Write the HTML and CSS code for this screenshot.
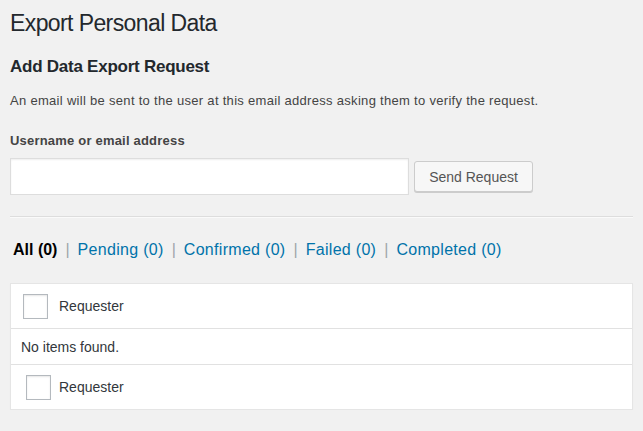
FILE: index.html
```html
<!DOCTYPE html>
<html lang="en">
<head>
<meta charset="utf-8">
<title>Export Personal Data</title>
<link rel="stylesheet" href="styles.css">
</head>
<body>
<div class="wrap">
  <h1 class="title">Export Personal Data</h1>
  <h2 class="subtitle">Add Data Export Request</h2>
  <p class="desc">An email will be sent to the user at this email address asking them to verify the request.</p>
  <label class="field-label" for="username">Username or email address</label>
  <div class="form-row">
    <input class="text-input" type="text" id="username">
    <button class="button" type="button">Send Request</button>
  </div>
  <hr class="divider">
  <ul class="filters">
    <li class="current">All <span>(0)</span></li>
    <li class="sep">|</li>
    <li><a href="#">Pending (0)</a></li>
    <li class="sep">|</li>
    <li><a href="#">Confirmed (0)</a></li>
    <li class="sep">|</li>
    <li><a href="#">Failed (0)</a></li>
    <li class="sep">|</li>
    <li><a href="#">Completed (0)</a></li>
  </ul>
  <div class="table">
    <div class="row head">
      <span class="cbox"></span>
      <span class="col-label">Requester</span>
    </div>
    <div class="row empty">No items found.</div>
    <div class="row foot">
      <span class="cbox"></span>
      <span class="col-label">Requester</span>
    </div>
  </div>
</div>
</body>
</html>
```

FILE: styles.css
```css
* { box-sizing: border-box; }
html, body {
  margin: 0;
  padding: 0;
  background: #f1f1f1;
}
body {
  font-family: "Liberation Sans", Arial, sans-serif;
  color: #23282d;
  font-size: 13px;
}
.wrap {
  padding: 0 10px;
}
.title {
  margin: 0;
  padding-top: 9px;
  font-size: 23px;
  line-height: 29px;
  font-weight: 400;
  letter-spacing: -0.6px;
  color: #23282d;
}
.subtitle {
  margin: 18px 0 0;
  font-size: 17px;
  line-height: 22px;
  font-weight: 700;
  letter-spacing: -0.25px;
  color: #23282d;
}
.desc {
  margin: 13px 0 0;
  font-size: 13px;
  line-height: 20px;
  letter-spacing: 0.3px;
  color: #444;
}
.field-label {
  display: block;
  margin-top: 21px;
  font-size: 13px;
  line-height: 18px;
  font-weight: 700;
  letter-spacing: 0.2px;
  color: #444;
}
.form-row {
  display: flex;
  align-items: center;
  gap: 5px;
  margin-top: 8px;
}
.text-input {
  width: 399px;
  height: 37px;
  border: 1px solid #ddd;
  background: #fff;
  box-shadow: inset 0 1px 2px rgba(0,0,0,.07);
  margin: 0;
}
.button {
  height: 31px;
  width: 119px;
  padding: 0 10px;
  border: 1px solid #ccc;
  border-radius: 3px;
  background: #f7f7f7;
  box-shadow: 0 1px 0 #ccc;
  color: #555;
  font-family: inherit;
  font-size: 14px;
}
.divider {
  margin: 21px 0 0;
  border: 0;
  border-top: 1px solid #ddd;
  border-bottom: 1px solid #fafafa;
  height: 0;
}
.filters {
  list-style: none;
  margin: 16px 0 0;
  padding: 0 0 0 3px;
  display: flex;
  font-size: 16px;
  line-height: 32px;
}
.filters li.current {
  font-weight: 700;
  color: #000;
}
.filters li.sep {
  color: #a0a5aa;
  padding: 0 8px;
}
.filters a {
  color: #0073aa;
  text-decoration: none;
  letter-spacing: 0.3px;
}
.table {
  margin-top: 17px;
  background: #fff;
  border: 1px solid #e5e5e5;
  box-shadow: 0 1px 1px rgba(0,0,0,.04);
}
.row {
  display: flex;
  align-items: center;
  font-size: 14px;
  color: #32373c;
}
.row.head {
  height: 45px;
  border-bottom: 1px solid #e1e1e1;
  padding-left: 12px;
}
.row.empty {
  height: 36px;
  border-bottom: 1px solid #e1e1e1;
  padding-left: 10px;
}
.row.foot {
  height: 44px;
  padding-left: 15px;
}
.cbox {
  width: 25px;
  height: 25px;
  border: 1px solid #b4b9be;
  background: #fff;
  box-shadow: inset 0 1px 2px rgba(0,0,0,.1);
  flex: none;
}
.head .col-label { margin-left: 11px; }
.foot .col-label { margin-left: 8px; }
```
